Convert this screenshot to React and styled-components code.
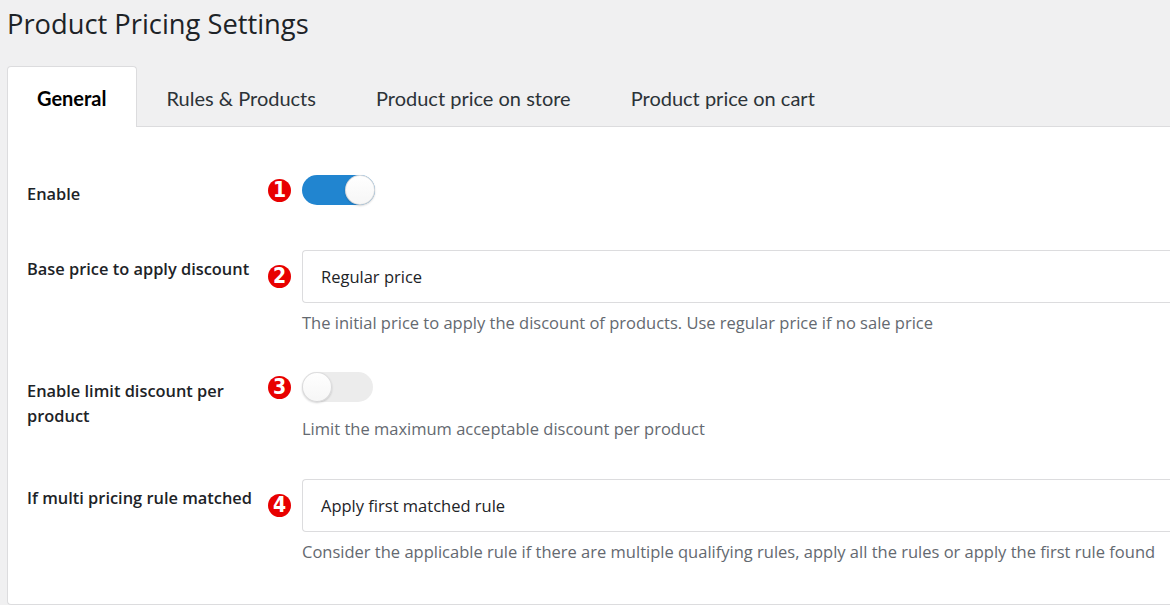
import React from 'react'
import styled, { createGlobalStyle } from 'styled-components'

const GlobalStyle = createGlobalStyle`
  body {
    margin: 0;
    background: #f0f0f1;
    overflow: hidden;
  }
`

const Page = styled.div`
  padding-left: 7px;
  width: 1220px;
`

const Title = styled.h1`
  margin: 0;
  padding-top: 5px;
  font-family: 'Open Sans', 'Noto Sans', sans-serif;
  font-size: 27.3px;
  font-weight: 400;
  line-height: 38px;
  color: #1d2327;
`

const TabBar = styled.nav`
  display: flex;
  margin-top: 23px;
`

const Tab = styled.a`
  display: block;
  padding: 0 29px;
  height: 60px;
  line-height: 62px;
  font-family: Lato, 'Open Sans', sans-serif;
  font-size: 20px;
  font-weight: ${p => (p.$active ? 700 : 400)};
  color: ${p => (p.$active ? '#000' : '#2c3338')};
  background: ${p => (p.$active ? '#fff' : 'transparent')};
  border: 1px solid ${p => (p.$active ? '#dcdcde' : 'transparent')};
  border-bottom: none;
  border-radius: 4px 4px 0 0;
  margin-bottom: -1px;
  position: relative;
  cursor: pointer;
`

const Card = styled.section`
  background: #fff;
  border: 1px solid #dcdcde;
  border-right: none;
  border-radius: 0 0 0 4px;
  padding: 48px 0 40px 19px;
`

/* label | badge | control, description under the control */
const Row = styled.div`
  display: grid;
  grid-template-columns: 241px 34px 1fr;
  grid-template-rows: auto auto;
  margin-top: ${p => p.$space || 0}px;
`

const Label = styled.label`
  grid-row: 1 / span 2;
  width: 232px;
  padding-top: 6px;
  font-family: 'Open Sans', 'Noto Sans', sans-serif;
  font-size: 16.4px;
  font-weight: 600;
  line-height: 25px;
  color: #1d2327;
`

const Badge = styled.span`
  align-self: center;
  width: 23px;
  height: 23px;
  border-radius: 50%;
  background: #e80000;
  color: #fff;
  display: flex;
  align-items: center;
  justify-content: center;
  font-family: 'Liberation Sans Narrow', 'DejaVu Sans Condensed', sans-serif;
  font-size: 21px;
  font-weight: 700;
  line-height: 1;
`

const Switch = styled.span`
  position: relative;
  display: block;
  width: ${p => (p.$on ? 73 : 71)}px;
  height: 30px;
  border-radius: 15px;
  background: ${p => (p.$on ? '#2185d0' : '#ececec')};
`

const Knob = styled.span`
  position: absolute;
  top: 0;
  left: ${p => (p.$on ? 'auto' : '0')};
  right: ${p => (p.$on ? '0' : 'auto')};
  width: 30px;
  height: 30px;
  border-radius: 50%;
  background: linear-gradient(#fff, #f6f6f6);
  box-shadow: 0 1px 2px rgba(34, 36, 38, 0.2), inset 0 0 0 1px rgba(34, 36, 38, 0.15);
`

const Select = styled.div`
  height: 51px;
  display: flex;
  align-items: center;
  padding: 0 18px;
  background: #fff;
  border: 1px solid #dcdcde;
  border-right: none;
  border-radius: 4px 0 0 4px;
  font-family: 'Open Sans', 'Noto Sans', sans-serif;
  font-size: 16.5px;
  color: #1d2327;
`

const Description = styled.p`
  grid-column: 3;
  margin: ${p => p.$space || 8}px 0 0;
  font-family: 'Open Sans', 'Noto Sans', sans-serif;
  font-size: 16.5px;
  line-height: 24px;
  color: #646970;
`

function Toggle({ on }) {
  return (
    <div>
      <Switch $on={on}>
        <Knob $on={on} />
      </Switch>
    </div>
  )
}

const tabs = ['General', 'Rules & Products', 'Product price on store', 'Product price on cart']

export default function App() {
  return (
    <>
      <GlobalStyle />
      <Page>
        <Title>Product Pricing Settings</Title>
        <TabBar>
          {tabs.map((t, i) => (
            <Tab key={t} $active={i === 0}>{t}</Tab>
          ))}
        </TabBar>
        <Card>
          <Row>
            <Label>Enable</Label>
            <Badge>1</Badge>
            <Toggle on />
          </Row>
          <Row $space={44}>
            <Label>Base price to apply discount</Label>
            <Badge>2</Badge>
            <Select>Regular price</Select>
            <Description>
              The initial price to apply the discount of products. Use regular price if no sale price
            </Description>
          </Row>
          <Row $space={37}>
            <Label>Enable limit discount per product</Label>
            <Badge>3</Badge>
            <Toggle />
            <Description $space={15}>Limit the maximum acceptable discount per product</Description>
          </Row>
          <Row $space={38}>
            <Label>If multi pricing rule matched</Label>
            <Badge>4</Badge>
            <Select>Apply first matched rule</Select>
            <Description>
              Consider the applicable rule if there are multiple qualifying rules, apply all the rules or apply the first rule found
            </Description>
          </Row>
        </Card>
      </Page>
    </>
  )
}
